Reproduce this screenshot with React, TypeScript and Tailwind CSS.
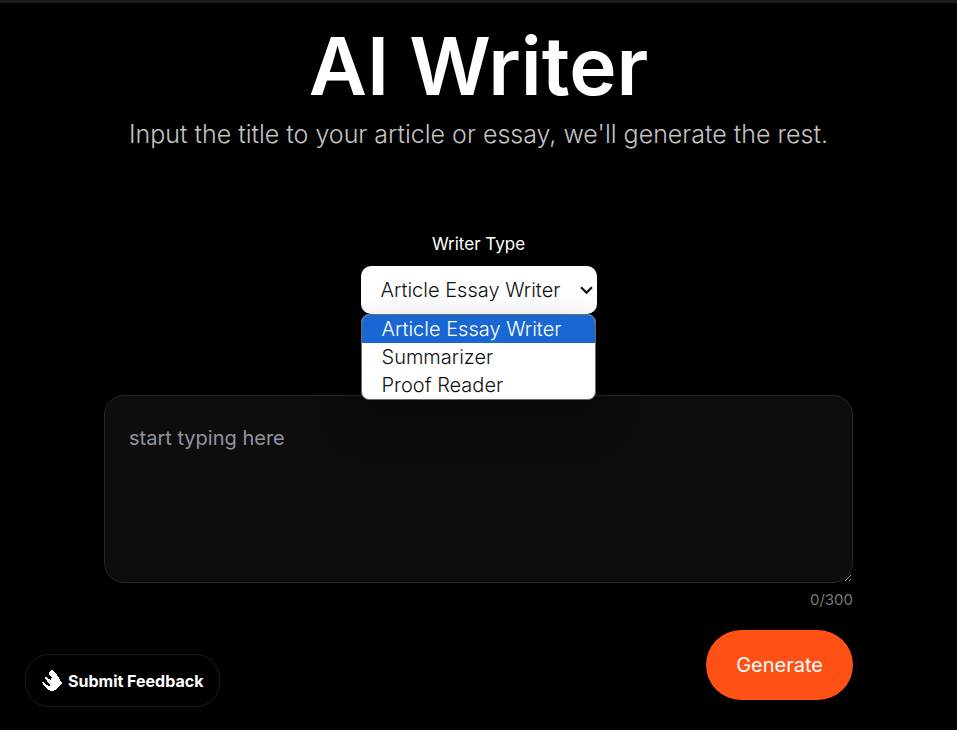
import { useState } from "react";

const writerTypes = ["Article Essay Writer", "Summarizer", "Proof Reader"];
const limit = 300;

function HandIcon() {
  return (
    <svg viewBox="0 0 20 21" className="h-[21px] w-5 shrink-0" fill="white" shapeRendering="crispEdges" aria-hidden="true">
      <path d="M9 0h2v1h1v1h1v1h1v1h1v2h1v1h1v2h1v2h1v1h1v2h-1v1h-1v1h-1v1h-1v1h-1v1h-1v1h-2v1h-1v1h-2v-1H8v-1H6v-1H5v-1H4v-1H3v-1H2v-1H1v-2H0v-1h2v1h1v1h1v1h2v1h2v-2H7v-1H6v-1H5v-2H4v-1H3V7h2v1h1v1h2v1h1V8h1V7H9V6H8V5H7V2h1V1h1z" />
    </svg>
  );
}

export default function App() {
  const [type, setType] = useState(writerTypes[0]);
  const [open, setOpen] = useState(true);
  const [text, setText] = useState("");

  const choose = (name: string) => {
    setType(name);
    setOpen(false);
  };

  return (
    <div className="min-h-screen border-t-3 border-[#1c1c1c] bg-black font-['Inter','Liberation_Sans',sans-serif] text-white">
      <main className="mx-auto flex w-full max-w-[749px] flex-col items-center pt-[13px]">
        <h1 className="text-center text-[80px] leading-[100px] font-semibold">AI Writer</h1>
        <p className="text-center text-[25px] leading-9 font-light text-[#c4c4c4]">
          Input the title to your article or essay, we'll generate the rest.
        </p>

        <label htmlFor="writer-type" className="mt-20 text-[17px] leading-6">
          Writer Type
        </label>
        <div className="relative mt-2.5 w-59">
          <select
            id="writer-type"
            value={type}
            onChange={(e) => choose(e.target.value)}
            className="block h-12 w-full appearance-none rounded-[10px] bg-white pr-8 pl-5 text-xl font-light text-[#111111] outline-none"
          >
            {writerTypes.map((name) => (
              <option key={name}>{name}</option>
            ))}
          </select>
          <svg viewBox="0 0 12 8" className="pointer-events-none absolute top-5 right-1 h-[9px] w-[13px]" fill="none" stroke="#111111" strokeWidth="2" aria-hidden="true">
            <path d="M1 1l5 5 5-5" />
          </svg>
          {open && (
            <ul
              role="listbox"
              aria-label="Writer Type"
              className="absolute top-full left-0 z-10 w-[235px] overflow-hidden rounded-lg border border-[#6b6b6b] bg-white shadow-[0_20px_40px_rgba(0,0,0,0.4)]"
            >
              {writerTypes.map((name) => (
                <li
                  key={name}
                  role="option"
                  aria-selected={name === type}
                  onClick={() => choose(name)}
                  className={
                    name === type
                      ? "bg-[#1967d2] pl-5 text-xl leading-7 font-light text-white"
                      : "pl-5 text-xl leading-7 font-light text-[#111111]"
                  }
                >
                  {name}
                </li>
              ))}
            </ul>
          )}
        </div>

        <textarea
          aria-label="Title"
          placeholder="start typing here"
          maxLength={limit}
          value={text}
          onChange={(e) => setText(e.target.value)}
          className="mt-[81px] block h-47 w-full resize rounded-[20px] border border-[#262626] bg-[#0d0d0d] px-6 py-7 text-xl leading-7 text-white outline-none placeholder:text-[#9095a3]"
        />
        <p className="mt-[5px] self-end text-[15px] leading-6 text-[#7a7a7a]">
          {text.length}/{limit}
        </p>
        <button
          type="button"
          className="mt-[18px] h-[70px] self-end rounded-full bg-[#ff5015] px-[30px] text-xl text-white"
        >
          Generate
        </button>
      </main>

      <button
        type="button"
        className="fixed bottom-[23px] left-[25px] flex h-[53px] items-center gap-1.5 rounded-3xl border border-[#1c1c1c] bg-black px-4 text-base font-bold text-white"
      >
        <HandIcon />
        Submit Feedback
      </button>
    </div>
  );
}
